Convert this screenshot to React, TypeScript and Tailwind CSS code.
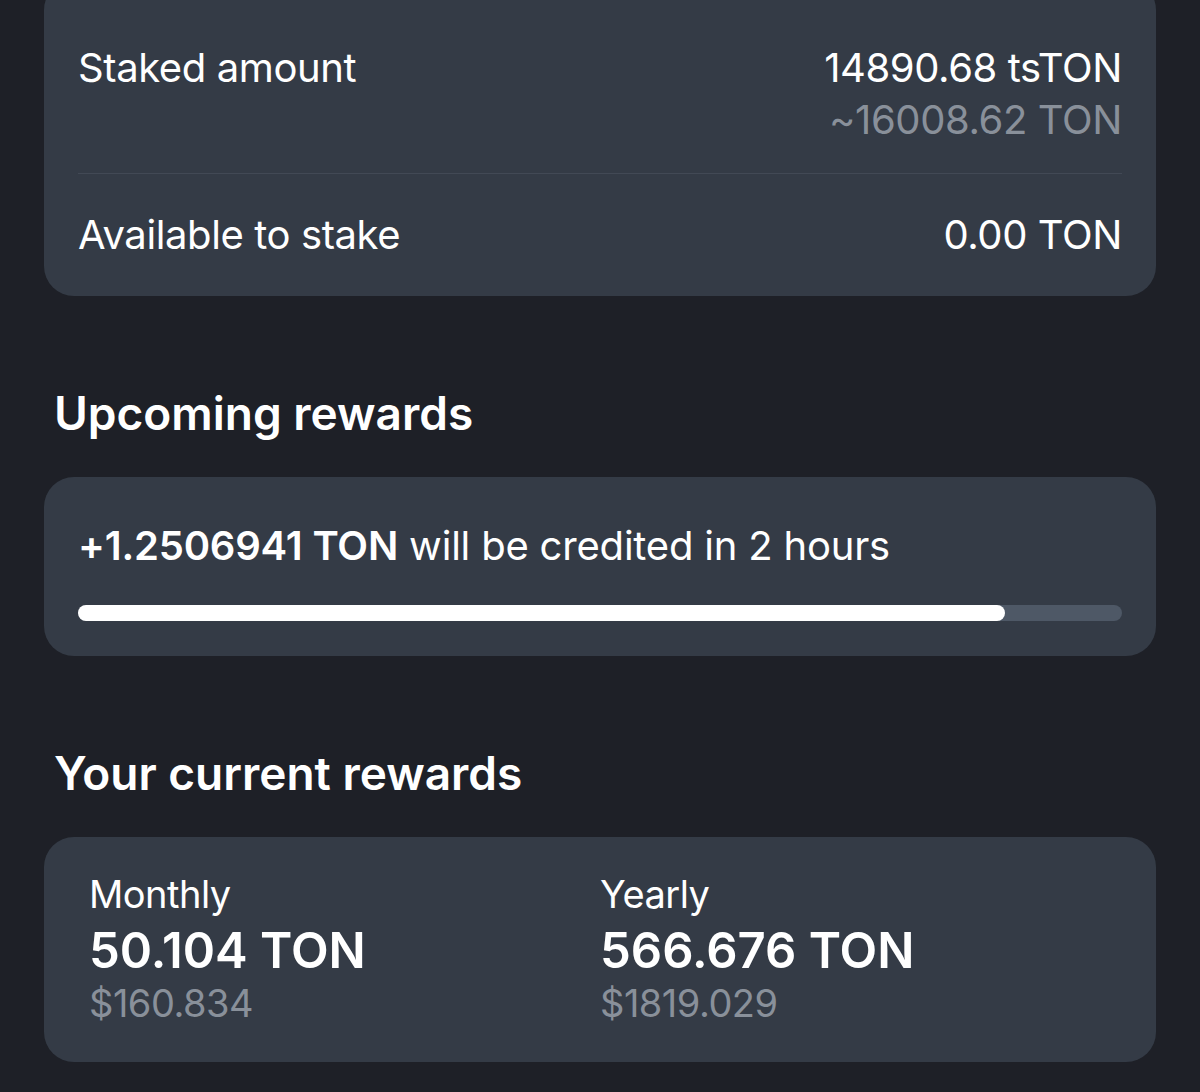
import React from "react";

const rewards = [
  { label: "Monthly", amount: "50.104 TON", usd: "$160.834" },
  { label: "Yearly", amount: "566.676 TON", usd: "$1819.029" },
];

const progress = 0.888;

export default function App() {
  return (
    <div
      className="min-h-[1092px] overflow-hidden bg-[#1e2027] px-[44px] text-white"
      style={{ fontFamily: "Inter, 'Noto Sans', sans-serif" }}
    >
      <main className="w-full">
        <section className="-mt-5 rounded-[30px] bg-[#343b46] px-[34px]">
          <div className="flex items-start justify-between pb-[27px] pt-[62px]">
            <p className="text-[40px] leading-[52px] tracking-[-0.4px]">Staked amount</p>
            <div className="text-right text-[40px] leading-[52px] tracking-[-0.4px]">
              <p>14890.68 tsTON</p>
              <p className="text-[#89909a]">~16008.62 TON</p>
            </div>
          </div>
          <div className="h-px bg-[#424955]" />
          <div className="flex items-center justify-between pb-[35px] pt-[35px] text-[40px] leading-[52px] tracking-[-0.4px]">
            <p>Available to stake</p>
            <p>0.00 TON</p>
          </div>
        </section>

        <h2 className="mb-[36px] mt-[89px] pl-[10px] text-[46px] font-semibold leading-[56px]">
          Upcoming rewards
        </h2>

        <section className="rounded-[30px] bg-[#343b46] px-[34px] pb-[35px] pt-[44px]">
          <p className="text-[40px] leading-[50px] tracking-[-0.2px]">
            <span className="font-semibold">+1.2506941 TON</span> will be credited in 2 hours
          </p>
          <div className="mt-[34px] h-[16px] w-full rounded-full bg-[#4e5866]">
            <div
              className="h-full rounded-full bg-white"
              style={{ width: `${progress * 100}%` }}
            />
          </div>
        </section>

        <h2 className="mb-[36px] mt-[89px] pl-[10px] text-[46px] font-semibold leading-[56px]">
          Your current rewards
        </h2>

        <section className="grid grid-cols-2 rounded-[30px] bg-[#343b46] px-[45px] pb-[36px] pt-[34px]">
          {rewards.map((reward) => (
            <div key={reward.label}>
              <p className="text-[38px] leading-[46px] tracking-[-0.5px]">{reward.label}</p>
              <p className="mt-[6px] text-[49px] font-semibold leading-[56px]">
                {reward.amount}
              </p>
              <p className="mt-[1px] text-[38px] leading-[46px] tracking-[-0.5px] text-[#89909a]">
                {reward.usd}
              </p>
            </div>
          ))}
        </section>
      </main>
    </div>
  );
}
